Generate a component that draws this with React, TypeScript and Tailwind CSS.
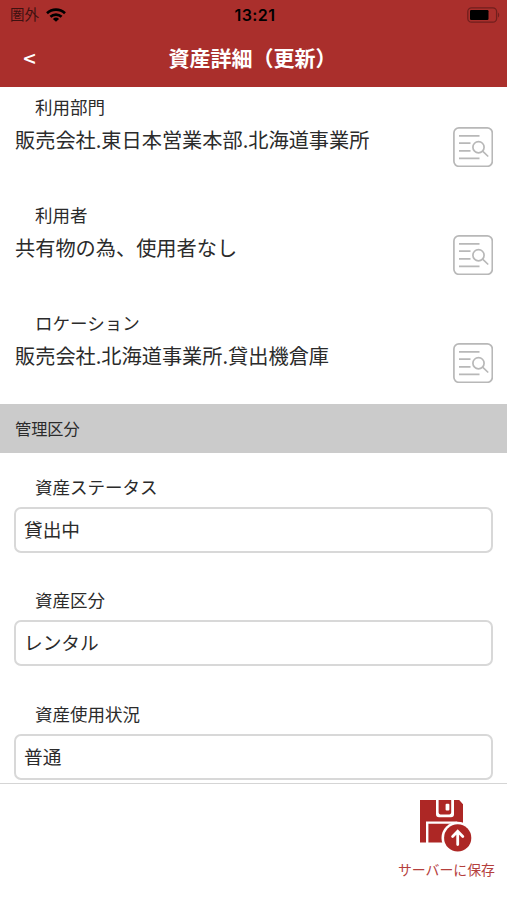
const lookupFields = [
  { label: "利用部門", value: "販売会社.東日本営業本部.北海道事業所" },
  { label: "利用者", value: "共有物の為、使用者なし" },
  { label: "ロケーション", value: "販売会社.北海道事業所.貸出機倉庫" },
];

const inputFields = [
  { label: "資産ステータス", value: "貸出中" },
  { label: "資産区分", value: "レンタル" },
  { label: "資産使用状況", value: "普通" },
];

function WifiIcon() {
  return (
    <svg width="20" height="14" viewBox="0 0 20 14" fill="none" stroke="#000" strokeWidth="2.6">
      <path d="M1 5.2a13 13 0 0 1 18 0" />
      <path d="M4.4 8.8a8.2 8.2 0 0 1 11.2 0" />
      <path d="M10 13.8 6.9 10.9a4.6 4.6 0 0 1 6.2 0Z" fill="#000" stroke="none" />
    </svg>
  );
}

function BatteryIcon() {
  return (
    <svg width="33" height="16" viewBox="0 0 33 16">
      <rect x="0.8" y="0.8" width="28.8" height="14.4" rx="3.8" fill="none" stroke="#711f1d" strokeWidth="1.3" />
      <rect x="3" y="3" width="18.5" height="10" rx="1.2" fill="#000" />
      <path d="M31 5.5c1.6.8 1.6 4.2 0 5Z" fill="#711f1d" />
    </svg>
  );
}

function LookupIcon() {
  return (
    <svg width="40" height="40" viewBox="0 0 40 40" fill="none" stroke="#b8b8b8" strokeWidth="1.7">
      <rect x="0.9" y="0.9" width="38.4" height="38.4" rx="5" />
      <path d="M6 8.8h20.5M6 16.2h11.5M6 23.8h11.5M6 31.4h20.5" />
      <circle cx="25.5" cy="20.2" r="5.6" />
      <path d="m29.6 24.2 5.6 5.3" />
    </svg>
  );
}

function SaveIcon() {
  return (
    <svg width="52" height="52" viewBox="0 0 52 52">
      <path d="M0 0h16v14.2a3 3 0 0 0 3 3h12a3 3 0 0 0 3-3V0h5.2L43 4.2v38.3H0Z" fill="#ad2725" />
      <path d="M18.6 0h12.6v12.6a1.8 1.8 0 0 1-1.8 1.8h-9a1.8 1.8 0 0 1-1.8-1.8Z" fill="#ad2725" />
      <rect x="25.6" y="3.8" width="3.8" height="6.8" rx="1" fill="#fff" />
      <path d="M7.2 43V22.6h30" fill="none" stroke="#fff" strokeWidth="2.4" />
      <circle cx="37.7" cy="37.9" r="16.2" fill="#fff" />
      <circle cx="37.7" cy="37.9" r="13.6" fill="#ad2725" />
      <path
        d="M37.7 44.5V31.5M32.6 36.4l5.1-5.1 5.1 5.1"
        fill="none"
        stroke="#fff"
        strokeWidth="2.8"
        strokeLinecap="round"
      />
    </svg>
  );
}

export default function App() {
  return (
    <div className="flex h-[900px] w-[507px] flex-col overflow-hidden bg-white font-['Noto_Sans_CJK_JP',sans-serif] text-[#2b2b2b]">
      <header className="h-[87px] shrink-0 bg-[#aa2f2c]">
        <div className="grid h-[29px] grid-cols-3 items-center pr-[7px] pl-[10px] text-black">
          <div className="flex items-center gap-[7px]">
            <span className="text-[14.5px] leading-none text-[#3d1110]">圏外</span>
            <WifiIcon />
          </div>
          <span className="text-center font-['Inter',sans-serif] text-[16px] leading-none font-semibold tracking-[0.4px]">
            13:21
          </span>
          <div className="flex justify-end">
            <BatteryIcon />
          </div>
        </div>
        <div className="grid h-[56px] grid-cols-[59px_1fr_61px] items-center text-white">
          <button type="button" className="text-center text-[22px] leading-none font-medium">
            &lt;
          </button>
          <h1 className="text-center text-[21px] leading-none font-bold whitespace-nowrap">資産詳細（更新）</h1>
        </div>
      </header>

      <main className="min-h-0 flex-1 overflow-hidden">
        <div className="flex flex-col gap-[35px] pt-[7px] pb-[21px]">
          {lookupFields.map((field) => (
            <div key={field.label} className="flex h-[73px] items-end justify-between pr-[14px] pl-[15px]">
              <div className="h-full">
                <div className="pl-5 text-[17.5px] leading-[25px]">{field.label}</div>
                <div className="pt-[6px] text-[20.2px] leading-[30px]">{field.value}</div>
              </div>
              <button type="button">
                <LookupIcon />
              </button>
            </div>
          ))}
        </div>

        <h2 className="flex h-[49px] items-center bg-[#cbcbcb] pl-[15px] text-[16.2px]">管理区分</h2>

        <div className="flex flex-col gap-[34.3px] px-[14px] pt-[21px]">
          {inputFields.map((field) => (
            <label key={field.label} className="block">
              <span className="block h-[33px] pl-[21px] text-[17.5px] leading-[25px]">{field.label}</span>
              <input
                className="block h-[46px] w-full rounded-[7px] border-2 border-[#d8d8d8] bg-white px-2 pb-[3px] text-[18.7px] outline-none"
                defaultValue={field.value}
              />
            </label>
          ))}
        </div>
      </main>

      <footer className="flex h-[117px] shrink-0 justify-end border-t border-[#d5d5d5] bg-white pr-[12px]">
        <button type="button" className="flex flex-col items-center pt-4 text-[#b5403d]">
          <SaveIcon />
          <span className="mt-[7px] text-[13.9px] leading-5">サーバーに保存</span>
        </button>
      </footer>
    </div>
  );
}
